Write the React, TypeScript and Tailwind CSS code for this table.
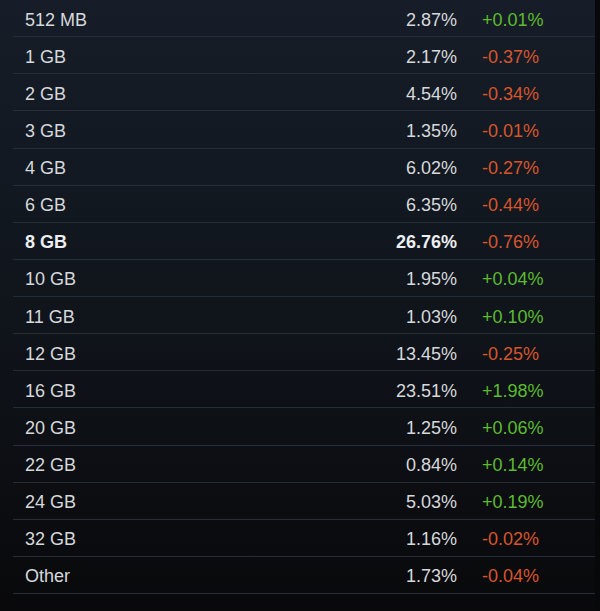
import React from "react";

const rows: [string, string, string, boolean?][] = [
  ["512 MB", "2.87%", "+0.01%"],
  ["1 GB", "2.17%", "-0.37%"],
  ["2 GB", "4.54%", "-0.34%"],
  ["3 GB", "1.35%", "-0.01%"],
  ["4 GB", "6.02%", "-0.27%"],
  ["6 GB", "6.35%", "-0.44%"],
  ["8 GB", "26.76%", "-0.76%", true],
  ["10 GB", "1.95%", "+0.04%"],
  ["11 GB", "1.03%", "+0.10%"],
  ["12 GB", "13.45%", "-0.25%"],
  ["16 GB", "23.51%", "+1.98%"],
  ["20 GB", "1.25%", "+0.06%"],
  ["22 GB", "0.84%", "+0.14%"],
  ["24 GB", "5.03%", "+0.19%"],
  ["32 GB", "1.16%", "-0.02%"],
  ["Other", "1.73%", "-0.04%"],
];

export default function App() {
  return (
    <div
      className="flex w-[600px] h-[611px] overflow-hidden text-[18px] text-[#d6d8db]"
      style={{ fontFamily: '"Liberation Sans", Arial, sans-serif' }}
    >
      <div className="w-[595px] h-full bg-gradient-to-b from-[#161d28] via-[#10151c] to-[#09090b] pl-[13px]">
        {rows.map(([label, pct, chg, bold]) => (
          <div
            key={label}
            className={`flex items-center h-[37.125px] pt-[4px] border-b border-[#252d38] ${bold ? "font-bold text-[#eceef0]" : ""}`}
          >
            <div className="flex-1 pl-3">{label}</div>
            <div className="text-right">{pct}</div>
            <div
              className={`w-[138px] pl-[25px] font-normal ${chg.startsWith("+") ? "text-[#5cbb2e]" : "text-[#d8552b]"}`}
            >
              {chg}
            </div>
          </div>
        ))}
      </div>
      <div className="w-[5px] h-full bg-[#07080a]" />
    </div>
  );
}
